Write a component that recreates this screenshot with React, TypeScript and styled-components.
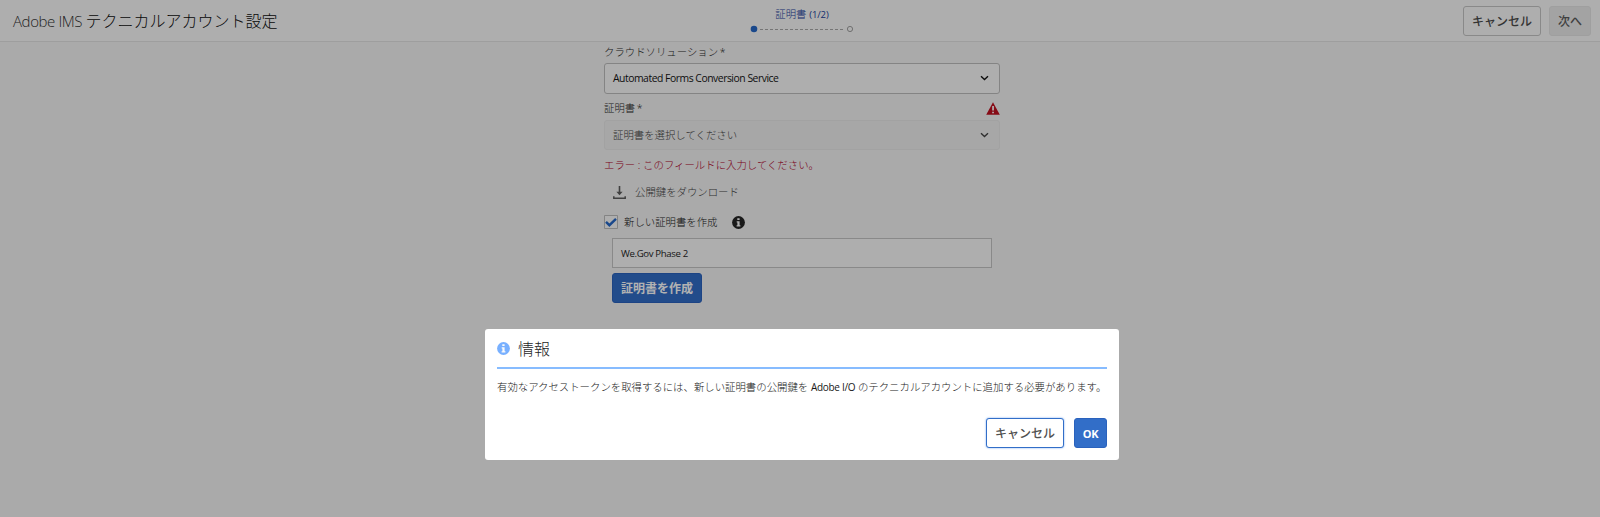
import React from "react";
import styled, { createGlobalStyle } from "styled-components";

const Global = createGlobalStyle`
  * { box-sizing: border-box; }
  body {
    margin: 0;
    background: #f4f4f4;
    color: #181818;
    font: 300 10.4px/16px "Noto Sans", "Noto Sans CJK JP", sans-serif;
  }
  svg { display: block; flex: none; }
`;

const Page = styled.div`
  position: relative;
  height: 517px;
  overflow: hidden;
`;

const Header = styled.header`
  display: grid;
  grid-template-columns: 1fr auto 1fr;
  height: 42px;
  padding: 0 9px 0 13px;
  background: #fafafa;
  border-bottom: 1px solid #e2e2e2;
`;

const PageTitle = styled.h1`
  margin: 0;
  font-size: 16px;
  line-height: 42px;
  font-weight: 300;
  color: #0c0c0c;
  white-space: nowrap;
`;

const Latin = styled.span<{ $size: number; $track?: number; $color?: string }>`
  font-family: "Open Sans", sans-serif;
  font-size: ${(p) => p.$size}px;
  letter-spacing: ${(p) => p.$track ?? 0}px;
  ${(p) => p.$color && `color: ${p.$color};`}
`;

const Field = styled(Latin)`
  font-weight: 400;
`;

const Stepper = styled.div`
  display: flex;
  flex-direction: column;
  align-items: center;
  gap: 2px;
  padding-top: 6px;
  color: #1a3f9c;
`;

const Actions = styled.div`
  display: flex;
  justify-content: flex-end;
  gap: 8px;
  padding-top: 6px;
`;

type Kind = "plain" | "disabled" | "primary" | "focused";
const kinds: Record<Kind, string> = {
  plain: "background:#fafafa;border-color:#c4c4c4;color:#4b4b4b;",
  disabled: "background:#eaeaea;border-color:#e4e4e4;color:#5c5c5c;",
  primary: "background:#326ec8;border-color:#2a62bd;color:#fff;font-weight:700;",
  focused: "background:#fff;border-color:#326ec8;color:#505050;box-shadow:0 0 2px #6ba0ee;",
};

const Button = styled.button<{ $kind: Kind; $width: number }>`
  width: ${(p) => p.$width}px;
  height: 30px;
  padding: 1px 0 0;
  border: 1px solid;
  border-radius: 3px;
  font: 500 12px/16px "Noto Sans", "Noto Sans CJK JP", sans-serif;
  white-space: nowrap;
  ${(p) => kinds[p.$kind]}
`;

const Form = styled.main`
  width: 396px;
  margin-left: 604px;
  padding-top: 2px;
`;

const Label = styled.div`
  display: flex;
  justify-content: space-between;
  align-items: center;
  height: 16px;
  color: #2c2c2c;
  word-spacing: -1px;
`;

const Select = styled.div<{ $disabled?: boolean }>`
  display: flex;
  justify-content: space-between;
  align-items: center;
  height: ${(p) => (p.$disabled ? 30 : 31)}px;
  margin: ${(p) => (p.$disabled ? "4px 0 7px" : "3px 0 6px")};
  padding: 0 10px 1px 8px;
  border: 1px solid ${(p) => (p.$disabled ? "#e8e8e8" : "#bdbdbd")};
  border-radius: 3px;
  background: ${(p) => (p.$disabled ? "#f0f0f0" : "#fafafa")};
  color: ${(p) => (p.$disabled ? "#444" : "#141414")};
`;

const ErrorText = styled.div`
  color: #b00028;
`;

const Download = styled.div`
  display: flex;
  align-items: center;
  gap: 9px;
  height: 16px;
  margin: 11px 0 0 9px;
  color: #444;
`;

const CheckRow = styled.label`
  display: flex;
  align-items: center;
  height: 16px;
  margin-top: 14px;
`;

const CheckText = styled.span`
  margin: 0 14px 0 6px;
`;

const TextField = styled.div`
  width: 380px;
  height: 30px;
  margin: 8px 0 5px 8px;
  padding-left: 8px;
  border: 1px solid #c4c4c4;
  background: #fafafa;
  color: #242424;
  line-height: 29px;
`;

const CreateSlot = styled.div`
  margin-left: 8px;
`;

const Backdrop = styled.div`
  position: absolute;
  inset: 0;
  background: rgba(0, 0, 0, 0.3);
`;

const Dialog = styled.section`
  position: absolute;
  left: 485px;
  top: 329px;
  width: 634px;
  height: 131px;
  padding: 0 12px;
  border-radius: 3px;
  background: #fff;
`;

const DialogHeader = styled.div`
  display: flex;
  align-items: center;
  gap: 8px;
  height: 40px;
  border-bottom: 2px solid #87bcff;
`;

const DialogTitle = styled.h2`
  margin: 2px 0 0;
  color: #1e1e1e;
  font-size: 16px;
  font-weight: 300;
`;

const DialogText = styled.p`
  margin: 10px 0 23px;
  white-space: nowrap;
`;

const DialogActions = styled.div`
  display: flex;
  justify-content: flex-end;
  gap: 10px;
`;

const InfoIcon = ({ color }: { color: string }) => (
  <svg width="13" height="13" viewBox="0 0 13 13">
    <circle cx="6.5" cy="6.5" r="6.4" fill={color} />
    <path d="M5.3 2.2h2.3v1.9H5.3zM4.7 5.2h2.9v4h.8v1.2H4.6V9.2h.8V6.4h-.7z" fill="#fafafa" />
  </svg>
);

const Chevron = () => (
  <svg width="9" height="6" viewBox="0 0 9 6">
    <path d="M1 1.2 4.5 4.5 8 1.2" fill="none" stroke="currentColor" strokeWidth="1.4" />
  </svg>
);

export default function App() {
  return (
    <Page>
      <Global />
      <Header>
        <PageTitle><Latin $size={15} $track={-0.4} $color="#323232">Adobe IMS </Latin>テクニカルアカウント設定</PageTitle>
        <Stepper>
          <div>証明書 <Field $size={9.5} $track={-0.1}>(1/2)</Field></div>
          <svg width="104" height="8" viewBox="0 0 104 8">
            <circle cx="4" cy="4" r="3.3" fill="#2668c8" />
            <path d="M10 4.5H95" stroke="#a8a8a8" strokeDasharray="3 2" />
            <circle cx="100" cy="4" r="2.6" fill="none" stroke="#a0a0a0" />
          </svg>
        </Stepper>
        <Actions>
          <Button $kind="plain" $width={78}>キャンセル</Button>
          <Button $kind="disabled" $width={42}>次へ</Button>
        </Actions>
      </Header>
      <Form>
        <Label>クラウドソリューション *</Label>
        <Select><Field $size={10.4} $track={-0.48}>Automated Forms Conversion Service</Field><Chevron /></Select>
        <Label>
          証明書 *
          <svg width="14" height="13" viewBox="0 0 14 13">
            <path d="M7 .3 13.8 12.7H.2z" fill="#c01020" />
            <path d="M6.2 4h1.7v4.6H6.2zM6.2 9.7h1.7v1.6H6.2z" fill="#fff" />
          </svg>
        </Label>
        <Select $disabled>証明書を選択してください<Chevron /></Select>
        <ErrorText>エラー : このフィールドに入力してください。</ErrorText>
        <Download>
          <svg width="13" height="13" viewBox="0 0 13 13" fill="none" stroke="#5c5c5c">
            <path d="M6.5 0v7" strokeWidth="1.6" />
            <path d="M3.4 5.7h6.2L6.5 9.3z" fill="#5c5c5c" stroke="none" />
            <path d="M.8 10.2v2h11.4v-2" strokeWidth="1.5" />
          </svg>
          公開鍵をダウンロード
        </Download>
        <CheckRow>
          <svg width="14" height="14" viewBox="0 0 14 14">
            <path d="M.5.5h13v13H.5z" fill="#fafafa" stroke="#bdbdbd" />
            <path d="M2 6.8 5.4 10.2 12 3.8" fill="none" stroke="#2668c8" strokeWidth="2.4" />
          </svg>
          <CheckText>新しい証明書を作成</CheckText>
          <InfoIcon color="#242424" />
        </CheckRow>
        <TextField><Field $size={9.6} $track={-0.35}>We.Gov Phase 2</Field></TextField>
        <CreateSlot><Button $kind="primary" $width={90}>証明書を作成</Button></CreateSlot>
      </Form>
      <Backdrop />
      <Dialog>
        <DialogHeader><InfoIcon color="#78b0ff" /><DialogTitle>情報</DialogTitle></DialogHeader>
        <DialogText>
          有効なアクセストークンを取得するには、新しい証明書の公開鍵を <Field $size={10} $track={-0.3}>Adobe I/O</Field> のテクニカルアカウントに追加する必要があります。
        </DialogText>
        <DialogActions>
          <Button $kind="focused" $width={78}>キャンセル</Button>
          <Button $kind="primary" $width={33}><Latin $size={11} $track={-0.3}>OK</Latin></Button>
        </DialogActions>
      </Dialog>
    </Page>
  );
}
